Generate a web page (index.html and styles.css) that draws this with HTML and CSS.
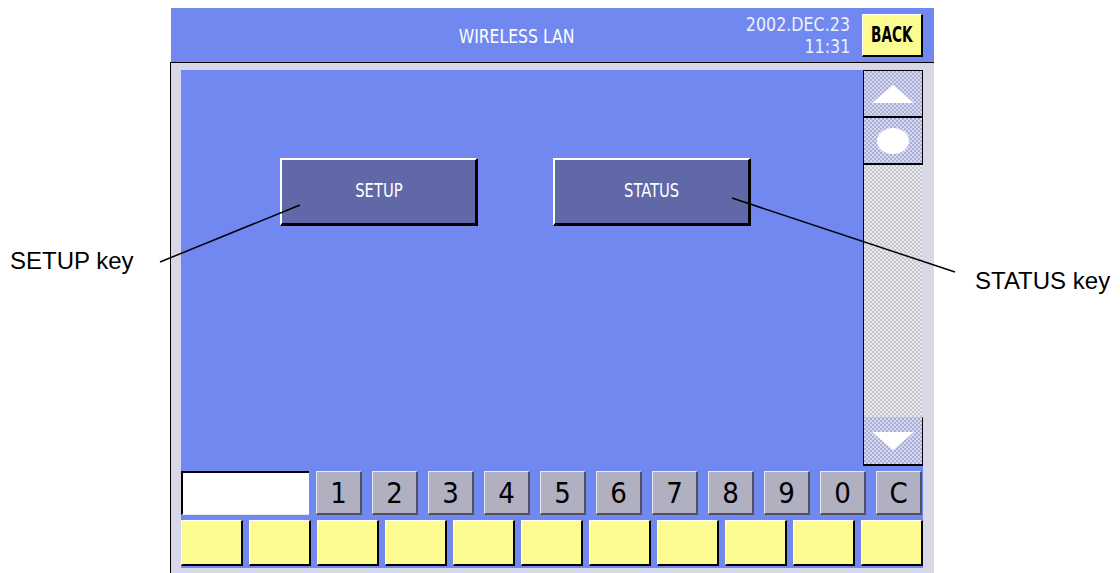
FILE: index.html
```html
<!DOCTYPE html>
<html lang="en">

<head>
    <meta charset="UTF-8">
    <title>Wireless LAN</title>
    <link rel="stylesheet" href="styles.css">
</head>

<body>
    <div class="page">
        <div class="screen">
            <div class="topbar">
                <div class="title"><span class="squeeze">WIRELESS LAN</span></div>
                <div class="clock">
                    <div><span class="squeeze">2002.DEC.23</span></div>
                    <div><span class="squeeze">11:31</span></div>
                </div>
                <button class="back"><span class="squeeze">BACK</span></button>
            </div>
            <div class="frame">
                <div class="panel">
                    <div class="upper">
                        <div class="keys-area">
                            <button class="menu-key"><span class="squeeze">SETUP</span></button>
                            <button class="menu-key"><span class="squeeze">STATUS</span></button>
                        </div>
                        <div class="scrollbar">
                            <div class="scroll-btn">
                                <svg width="46" height="20" viewBox="0 0 46 20"><polygon points="23,1 44,19 2,19" fill="#fff"/></svg>
                            </div>
                            <div class="scroll-btn">
                                <svg width="46" height="32" viewBox="0 0 46 32"><ellipse cx="23" cy="16" rx="16" ry="13" fill="#fff"/></svg>
                            </div>
                            <div class="track"></div>
                            <div class="scroll-btn down">
                                <svg width="46" height="20" viewBox="0 0 46 20"><polygon points="2,1 44,1 23,19" fill="#fff"/></svg>
                            </div>
                        </div>
                    </div>
                    <div class="num-row">
                        <div class="entry"></div>
                        <button class="num">1</button>
                        <button class="num">2</button>
                        <button class="num">3</button>
                        <button class="num">4</button>
                        <button class="num">5</button>
                        <button class="num">6</button>
                        <button class="num">7</button>
                        <button class="num">8</button>
                        <button class="num">9</button>
                        <button class="num">0</button>
                        <button class="num">C</button>
                    </div>
                    <div class="fn-row">
                        <button class="fn"></button>
                        <button class="fn"></button>
                        <button class="fn"></button>
                        <button class="fn"></button>
                        <button class="fn"></button>
                        <button class="fn"></button>
                        <button class="fn"></button>
                        <button class="fn"></button>
                        <button class="fn"></button>
                        <button class="fn"></button>
                        <button class="fn"></button>
                    </div>
                </div>
            </div>
        </div>

        <div class="callout callout-setup">SETUP key</div>
        <div class="callout callout-status">STATUS key</div>
        <svg class="leaders" width="1120" height="573">
            <line x1="160" y1="262" x2="300" y2="205" stroke="#000" stroke-width="1.5"/>
            <line x1="732" y1="198" x2="955" y2="272" stroke="#000" stroke-width="1.5"/>
        </svg>
    </div>
</body>
</html>
```

FILE: styles.css
```css
body {
    margin: 0;
    background: #fff;
    font-family: "Liberation Sans", Arial, sans-serif;
}

.page {
    position: relative;
    width: 1120px;
    height: 573px;
    overflow: hidden;
}

.screen {
    margin-left: 170px;
    padding-top: 8px;
    width: 764px;
    font-family: "DejaVu Sans Condensed", "DejaVu Sans", sans-serif;
}

button {
    font-family: inherit;
    padding: 0;
    margin: 0;
    cursor: pointer;
}

.squeeze {
    display: inline-block;
    transform: scaleX(0.82);
}

/* top bar */
.topbar {
    margin-left: 1px;
    height: 54px;
    background: #7088f0;
    display: flex;
    align-items: center;
    color: #fff;
}

.title {
    flex: 1;
    padding-left: 124px;
    text-align: center;
    font-size: 20px;
    padding-top: 1px;
}

.title .squeeze {
    transform: scaleX(0.87);
}

.clock {
    text-align: right;
    font-size: 19px;
    line-height: 22px;
    color: #eef0ff;
    align-self: flex-start;
    padding-top: 5px;
}

.clock .squeeze {
    transform-origin: right center;
    transform: scaleX(0.93);
}

.back {
    margin-left: 12px;
    margin-right: 11px;
    width: 61px;
    height: 43px;
    background: #fcfc90;
    border: none;
    border-top: 1px solid #fff;
    border-left: 1px solid #fff;
    border-right: 2px solid #000;
    border-bottom: 2px solid #000;
    font-size: 21px;
    font-weight: bold;
    color: #000;
}

.back .squeeze {
    transform: scaleX(0.72);
}

/* frame around the work area */
.frame {
    border-top: 1px solid #000;
    border-left: 1px solid #000;
    background: #d8d8e8;
    padding: 7px 11px 5px 10px;
}

.panel {
    background: #7088f0;
    padding-bottom: 2px;
    display: flex;
    flex-direction: column;
    gap: 5px;
}

.upper {
    height: 396px;
    display: flex;
}

.keys-area {
    flex: 1;
    display: flex;
    align-items: flex-start;
    gap: 75px;
    padding: 88px 0 0 99px;
}

.menu-key {
    width: 198px;
    height: 68px;
    background: #6068a8;
    color: #fff;
    font-size: 20px;
    border: none;
    border-top: 2px solid #fff;
    border-left: 2px solid #fff;
    border-right: 3px solid #000;
    border-bottom: 3px solid #000;
    padding-bottom: 4px;
}

/* scrollbar */
.scrollbar {
    width: 59px;
    border-left: 1px solid #000;
    display: flex;
    flex-direction: column;
}

.scroll-btn {
    height: 45px;
    border: 1px solid #000;
    border-left: none;
    border-bottom-width: 2px;
    background: repeating-conic-gradient(#a8b0d8 0 25%, #d8d8f0 0 50%) 0 0 / 4px 4px;
    display: flex;
    align-items: center;
    justify-content: center;
}

.scroll-btn + .scroll-btn {
    border-top: none;
}

.track {
    flex: 1;
    background: repeating-conic-gradient(#c4c4cc 0 25%, #ececf0 0 50%) 0 0 / 4px 4px;
    border-right: 1px solid #d8d8e8;
}

.scroll-btn.down {
    height: 46px;
    border-top: 1px solid #c4c4cc;
}

/* number row */
.num-row {
    height: 44px;
    display: flex;
    gap: 10px;
}

.entry {
    width: 126px;
    margin-right: -3px;
    background: #fff;
    border-top: 2px solid #000;
    border-left: 2px solid #000;
    border-bottom: 1px solid #e8e8f0;
}

.num {
    width: 46px;
    height: 44px;
    background: #b0b0c0;
    border: none;
    border-top: 1px solid #e8e8f0;
    border-left: 1px solid #e8e8f0;
    border-right: 2px solid #505060;
    border-bottom: 2px solid #505060;
    font-size: 29px;
    color: #000;
    line-height: 40px;
}

/* function row */
.fn-row {
    height: 46px;
    display: flex;
    gap: 6px;
}

.fn {
    flex: 1;
    background: #fcfc90;
    border: none;
    border-top: 1px solid #fff;
    border-left: 1px solid #fff;
    border-right: 2px solid #000;
    border-bottom: 2px solid #000;
}

/* callouts */
.callout {
    position: absolute;
    font-size: 24px;
    color: #000;
    line-height: 1;
}

.callout-setup {
    left: 10px;
    top: 249px;
}

.callout-status {
    left: 975px;
    top: 269px;
}

.leaders {
    position: absolute;
    left: 0;
    top: 0;
    pointer-events: none;
}
```
